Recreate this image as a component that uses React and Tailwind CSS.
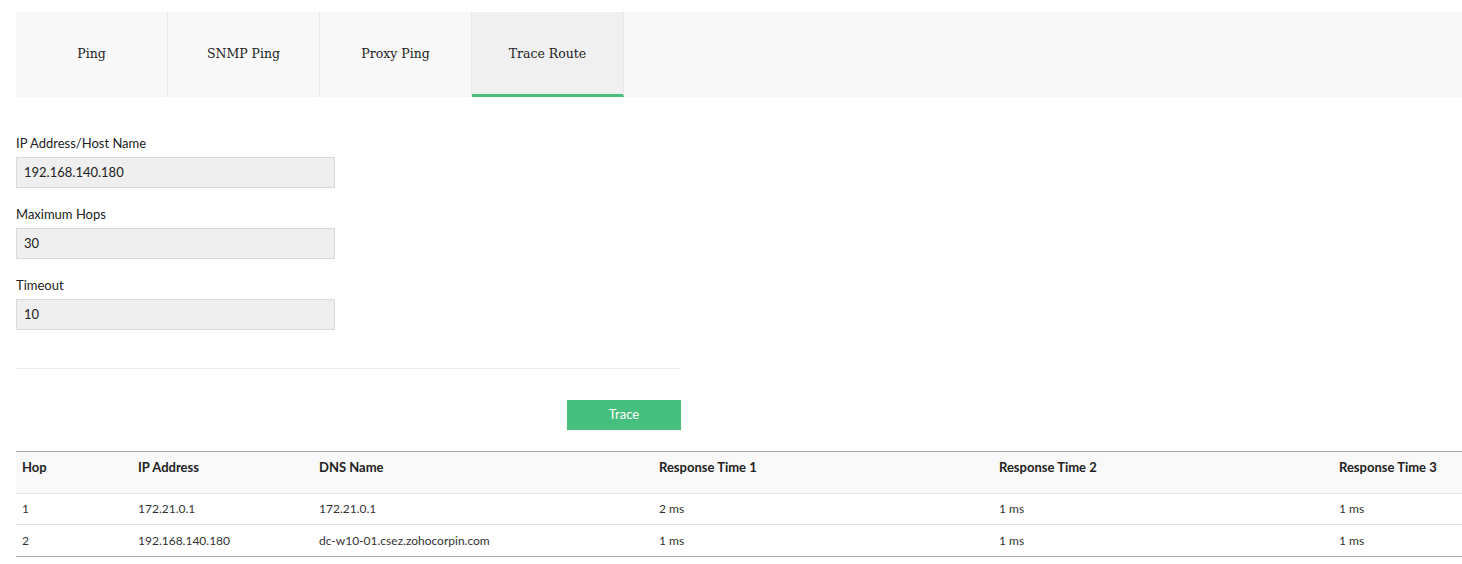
import React, { useState } from "react";

const tabs = ["Ping", "SNMP Ping", "Proxy Ping", "Trace Route"];

const fields = [
  { label: "IP Address/Host Name", value: "192.168.140.180" },
  { label: "Maximum Hops", value: "30" },
  { label: "Timeout", value: "10" },
];

const columns = [
  { name: "Hop", w: "w-[116px] shrink-0" },
  { name: "IP Address", w: "w-[181px] shrink-0" },
  { name: "DNS Name", w: "w-[340px] shrink-0" },
  { name: "Response Time 1", w: "w-[340px] shrink-0" },
  { name: "Response Time 2", w: "w-[340px] shrink-0" },
  { name: "Response Time 3", w: "flex-1" },
];

const hops = [
  ["1", "172.21.0.1", "172.21.0.1", "2 ms", "1 ms", "1 ms"],
  ["2", "192.168.140.180", "dc-w10-01.csez.zohocorpin.com", "1 ms", "1 ms", "1 ms"],
];

const App = () => {
  const [active, setActive] = useState(3);

  return (
    <div className="min-h-[564px] bg-white pl-4 pt-3 font-['Lato',sans-serif] text-[#222]">
      {/* tab bar */}
      <div className="flex h-[85px] bg-[#f8f8f8]">
        {tabs.map((t, i) => (
          <button
            key={t}
            onClick={() => setActive(i)}
            className={
              "flex h-full w-[152px] items-center justify-center border-r border-[#e8e8e8] font-['DejaVu_Serif',serif] text-[12.5px] text-[#222] " +
              (active === i ? "border-b-[3px] border-b-[#45be7e] bg-[#f0f0f0] pt-[2px]" : "")
            }
          >
            {t}
          </button>
        ))}
      </div>

      {/* form */}
      <div className="w-[665px] pt-[38px]">
        {fields.map((f) => (
          <div key={f.label} className="mb-[18px]">
            <div className="mb-[5px] text-[13px] leading-[17px] text-[#222]">{f.label}</div>
            <div className="flex h-[31px] w-[319px] items-center border border-[#dadada] bg-[#efefef] pl-[7px] text-[13px] text-[#222]">
              {f.value}
            </div>
          </div>
        ))}
        <div className="mt-[38px] border-t border-[#ececec]" />
        <div className="flex justify-end pt-[31px]">
          <button className="h-[30px] w-[114px] bg-[#45be7e] text-[13px] text-white">Trace</button>
        </div>
      </div>

      {/* results table */}
      <div className="mt-[21px] border-t border-b border-[#aaaaaa]">
        <div className="flex h-[42px] items-start border-b border-[#e4e4e4] bg-[#f9f9f9] pt-[7px] text-[13px] font-bold leading-[16px] text-[#222]">
          {columns.map((c) => (
            <div key={c.name} className={"px-[6px] " + c.w}>
              {c.name}
            </div>
          ))}
        </div>
        {hops.map((row, r) => (
          <div
            key={r}
            className={
              "flex h-[31px] items-center text-[12px] text-[#333] " +
              (r < hops.length - 1 ? "border-b border-[#e4e4e4]" : "")
            }
          >
            {row.map((cell, i) => (
              <div key={i} className={"px-[6px] " + columns[i].w}>
                {cell}
              </div>
            ))}
          </div>
        ))}
      </div>
    </div>
  );
};

export default App;
